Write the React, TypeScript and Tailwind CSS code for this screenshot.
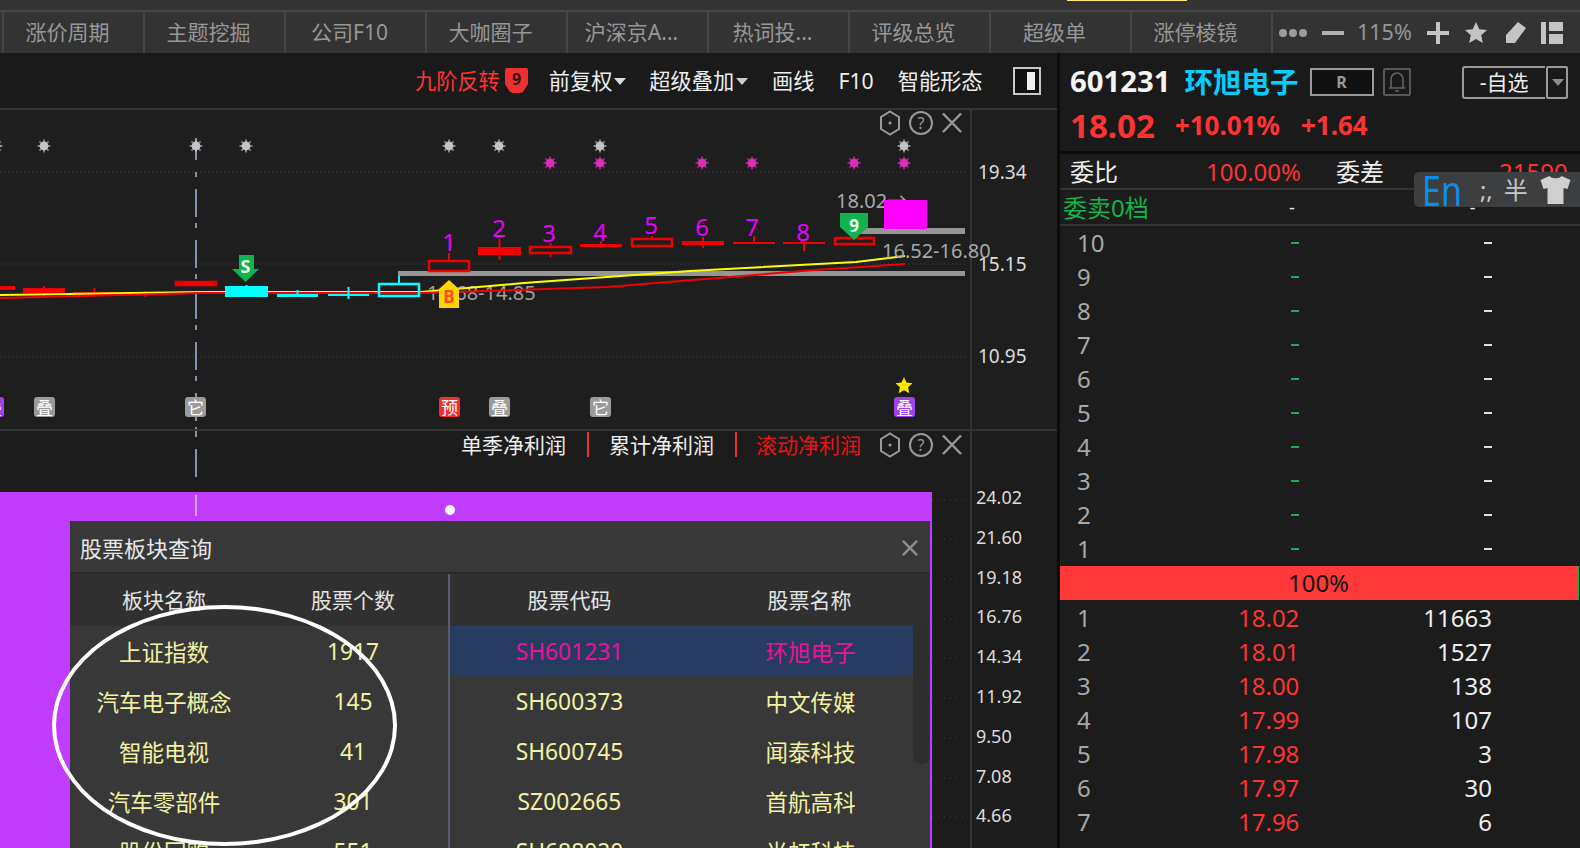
import React from "react";

const tabs = ["涨价周期", "主题挖掘", "公司F10", "大咖圈子", "沪深京A...", "热词投...", "评级总览", "超级单", "涨停棱镜"];

type C = { l: number; r: number; t: number; b: number; wt?: number; wb?: number; c: string; hollow?: boolean };
const R = "#f00000";
const Y = "#00ffff";
const candles: C[] = [
  { l: -10, r: 15, t: 286, b: 290, c: R },
  { l: 23, r: 65, t: 288, b: 293, wt: 286, wb: 296, c: R },
  { l: 73, r: 116, t: 292, b: 295, wt: 288, wb: 297, c: R },
  { l: 124, r: 167, t: 292, b: 295, wt: 291, wb: 297, c: R },
  { l: 175, r: 217, t: 281, b: 286, c: R, hollow: true },
  { l: 225, r: 268, t: 286, b: 297, wt: 285, c: Y },
  { l: 277, r: 318, t: 294, b: 297, wt: 290, c: Y },
  { l: 328, r: 369, t: 294, b: 296, wt: 287, wb: 299, c: Y },
  { l: 378, r: 420, t: 283, b: 297, wt: 276, c: Y, hollow: true },
  { l: 428, r: 470, t: 260, b: 272, wt: 253, c: R, hollow: true },
  { l: 478, r: 521, t: 247, b: 255, wt: 239, wb: 260, c: R },
  { l: 529, r: 572, t: 246, b: 254, wt: 243, wb: 257, c: R, hollow: true },
  { l: 580, r: 622, t: 244, b: 247, wt: 241, wb: 248, c: R },
  { l: 631, r: 673, t: 238, b: 247, wt: 236, c: R, hollow: true },
  { l: 682, r: 724, t: 241, b: 245, wt: 237, wb: 248, c: R },
  { l: 733, r: 775, t: 242, b: 244, wt: 236, c: R },
  { l: 783, r: 825, t: 242, b: 244, wb: 251, c: R },
  { l: 834, r: 875, t: 237, b: 245, c: R, hollow: true },
];
const nums = [[449, 242], [499, 228], [549, 233], [600, 232], [651, 225], [702, 227], [752, 227], [803, 232]];
const grayStars = [-4, 44, 196, 246, 449, 499, 600, 904];
const pinkStars = [550, 600, 702, 752, 854, 904];

function Star({ x, y, c }: { x: number; y: number; c: string }) {
  const rays = [0, 45, 90, 135];
  return (
    <g>
      {rays.map((a) => (
        <line key={a} x1={x - 6.5} y1={y} x2={x + 6.5} y2={y} stroke={c} strokeWidth={2} strokeOpacity={0.6} transform={`rotate(${a} ${x} ${y})`} />
      ))}
      <circle cx={x} cy={y} r={4.4} fill={c} />
    </g>
  );
}

function PanelIcons() {
  return (
    <svg width="92" height="28" viewBox="0 0 92 28" fill="none" stroke="#9a9a9a" strokeWidth="2">
      <path d="M12 2.500 21 8v12l-9 5.500L3 20V8z" />
      <circle cx="12" cy="14" r="1.600" fill="#9a9a9a" stroke="none" />
      <circle cx="43" cy="14" r="11" />
      <text x="43" y="20" textAnchor="middle" fontSize="16" fill="#9a9a9a" stroke="none">?</text>
      <path d="M65 4.500 83 23M83 4.500 65 23" strokeWidth="2.400" />
    </svg>
  );
}

function Badge({ t, bg, x }: { t: string; bg: string; x: string }) {
  return (
    <div className={`absolute top-[287px] w-[21px] h-[20px] rounded-[3px] flex items-center justify-center text-white text-[17px] leading-none ${bg} ${x}`}>
      {t}
    </div>
  );
}

function Tri({ c = "#dddddd" }: { c?: string }) {
  return (
    <svg width="12" height="7" viewBox="0 0 12 7" className="ml-[2px]">
      <path d="M0 0h12L6 7z" fill={c} />
    </svg>
  );
}

function Candle({ k, dark }: { k: C; dark: boolean }) {
  const cx = (k.l + k.r) / 2;
  return (
    <g>
      {k.wt !== undefined && <line x1={cx} x2={cx} y1={k.wt} y2={k.t} stroke={k.c} strokeWidth="2" />}
      {k.wb !== undefined && <line x1={cx} x2={cx} y1={k.b} y2={k.wb} stroke={k.c} strokeWidth="2" />}
      <rect x={k.l + (k.hollow ? 1 : 0)} y={k.t + (k.hollow ? 1 : 0)} width={k.r - k.l - (k.hollow ? 2 : 0)} height={k.b - k.t - (k.hollow ? 2 : 0)} fill={k.hollow ? (dark ? "#8b0000" : "none") : k.c} stroke={k.hollow ? k.c : "none"} strokeWidth="2.500" />
    </g>
  );
}

function Chart() {
  return (
    <svg className="absolute left-0 top-0 overflow-visible" width="970" height="319" viewBox="0 110 970 319">
      {[172, 264, 357].map((y) => (
        <line key={y} x1="0" x2="965" y1={y} y2={y} stroke="#444444" strokeDasharray="1 3" />
      ))}
      <line x1="196" x2="196" y1="138" y2="429" stroke="#8294ac" strokeWidth="2" strokeDasharray="22 12 5 12 28 6 5 12 28 6 5 12 28 6 5 12 28 6 5 12 28 6 5 12 28 6 5 12" />
      {grayStars.map((x) => <Star key={x} x={x} y={146} c="#c4c4c4" />)}
      {pinkStars.map((x) => <Star key={x} x={x} y={163} c="#d92fb4" />)}
      <rect x="860" y="228" width="105" height="6" fill="#969696" />
      <rect x="398" y="271" width="567" height="5" fill="#969696" />
      <text x="427" y="300" fontSize="20" fill="#a0a0a0">14.68-14.85</text>
      {candles.slice(0, 5).map((k, i) => <Candle key={i} k={k} dark={i === 4} />)}
      <polyline points="0,295 200,292 421,292 524,283 690,271 856,262 905,256" fill="none" stroke="#ffff00" strokeWidth="2" />
      <polyline points="0,298 200,293 421,293 607,287 815,270 905,264" fill="none" stroke="#f00000" strokeWidth="2" />
      {candles.slice(5).map((k, i) => <Candle key={i} k={k} dark={false} />)}
      {nums.map(([x, y], i) => (
        <text key={i} x={x} y={y + 9} textAnchor="middle" fontSize="24" fill="#e600ff">{i + 1}</text>
      ))}
      <text x="836" y="208" fontSize="20" fill="#a8a8a8">18.02→</text>
      <rect x="884" y="200" width="43" height="29" fill="#ff00ff" />
      <text x="882" y="258" fontSize="20" fill="#a8a8a8">16.52-16.80</text>
      <path d="M239 255h15v14h5l-13.500 13L232 269h7z" fill="#12b34c" />
      <text x="245.500" y="273" textAnchor="middle" fontSize="18" fontWeight="700" fill="#e8ffe8">S</text>
      <path d="M840 213h28v14l-14 13-14-13z" fill="#12b34c" />
      <text x="854" y="232" textAnchor="middle" fontSize="17" fontWeight="700" fill="#e8ffe8">9</text>
      <path d="M449 280l10 9v19h-20v-19z" fill="#ffd400" />
      <text x="449" y="303" textAnchor="middle" fontSize="17" fontWeight="700" fill="#ff4a20">B</text>
      <path d="M904 377l2.500 5.500 6 .7-4.400 4.100 1.200 6-5.300-3-5.300 3 1.200-6-4.400-4.100 6-.7z" fill="#ffe600" />
    </svg>
  );
}

const leftRows = [["上证指数", "1917"], ["汽车电子概念", "145"], ["智能电视", "41"], ["汽车零部件", "301"], ["股份回购", "551"]];
const rightRows = [["SH601231", "环旭电子"], ["SH600373", "中文传媒"], ["SH600745", "闻泰科技"], ["SZ002665", "首航高科"], ["SH688020", "光虹科技"]];
const lowAxis = ["24.02", "21.60", "19.18", "16.76", "14.34", "11.92", "9.50", "7.08", "4.66"];
const bids = [["18.02", "11663"], ["18.01", "1527"], ["18.00", "138"], ["17.99", "107"], ["17.98", "3"], ["17.97", "30"], ["17.96", "6"], ["17.95", "1"]];

function Dialog() {
  return (
    <div className="flex-1 min-w-0 h-full flex flex-col bg-[#383838] border-r-2 border-[#c03cff] text-[21px]">
      <div className="h-[51px] shrink-0 flex items-center justify-between pl-[10px] pr-[12px] pt-[3px] text-[#e8e8e8] text-[22px]">
        <span>股票板块查询</span>
        <svg width="16" height="16" viewBox="0 0 18 18" stroke="#8c8c8c" strokeWidth="2.800"><path d="M1 1l16 16M17 1 1 17" /></svg>
      </div>
      <div className="h-[2px] shrink-0 bg-[#2b2b2b]" />
      <div className="flex flex-1 min-h-0">
        <div className="w-[378px] shrink-0 flex flex-col">
          <div className="h-[52px] shrink-0 bg-[#303030] grid grid-cols-[188px_190px] items-center text-center text-[#e4e4e4] pt-[2px]">
            <span>板块名称</span><span>股票个数</span>
          </div>
          {leftRows.map(([a, b]) => (
            <div key={a} className="h-[50px] shrink-0 grid grid-cols-[188px_190px] items-center text-center text-[#f2f2a2] pt-[3px]">
              <span className="text-[22.500px]">{a}</span><span className="text-[22.800px]">{b}</span>
            </div>
          ))}
        </div>
        <div className="w-[2px] shrink-0 bg-[#5a5c70]" />
        <div className="flex-1 relative flex flex-col">
          <div className="h-[52px] shrink-0 bg-[#303030] grid grid-cols-[239px_241px] items-center text-center text-[#e4e4e4] pt-[2px]">
            <span>股票代码</span><span>股票名称</span>
          </div>
          {rightRows.map(([a, b], i) => (
            <div key={a} className={i === 0
              ? "h-[50px] w-[463px] shrink-0 grid grid-cols-[239px_243px] items-center text-center text-[#f0109a] bg-[#263c60] pt-[3px]"
              : "h-[50px] w-[463px] shrink-0 grid grid-cols-[239px_243px] items-center text-center text-[#f2f2a2] pt-[3px]"}>
              <span className="text-[22.800px]">{a}</span><span className="text-[22.500px]">{b}</span>
            </div>
          ))}
          <div className="absolute right-0 top-[52px] w-[17px] h-[138px] bg-[#2e2e2e] rounded-b-[8px]" />
        </div>
      </div>
    </div>
  );
}

export default function App() {
  return (
    <div className="w-[1580px] h-[848px] overflow-hidden flex flex-col bg-[#1c1c1c] font-['Noto_Sans','Noto_Sans_CJK_SC',sans-serif] relative">
      {/* top strip */}
      <div className="h-[10px] shrink-0 bg-[#333333] flex justify-start">
        <div className="ml-[1067px] w-[120px] h-[1px] bg-[#ffe27a]" />
      </div>
      <div className="h-[2px] shrink-0 bg-[#464646]" />
      <div className="h-[41px] shrink-0 bg-[#333333] flex items-stretch pl-[2px] text-[#979797] text-[21px]">
        {tabs.map((t) => (
          <div key={t} className="w-[141px] shrink-0 border-l-2 border-[#464646] flex items-center justify-center whitespace-nowrap pr-[12px]">{t}</div>
        ))}
        <div className="flex-1 border-l-2 border-[#464646] flex items-center pl-[5px]">
          <svg width="30" height="10" viewBox="0 0 30 10" fill="#9c9c9c"><circle cx="5" cy="5" r="4" /><circle cx="15" cy="5" r="4" /><circle cx="25" cy="5" r="4" /></svg>
          <div className="ml-[14px] w-[22px] h-[4px] bg-[#b0b0b0]" />
          <span className="ml-[13px] w-[56px] text-[21.500px] text-[#979797]">115%</span>
          <svg className="ml-[14px]" width="22" height="22" viewBox="0 0 22 22" fill="#c4c4c4"><rect x="9" y="0" width="4" height="22" /><rect x="0" y="9" width="22" height="4" /></svg>
          <svg className="ml-[15px]" width="24" height="24" viewBox="0 0 24 24" fill="#c4c4c4"><path d="M12 1l3.300 7.300 7.700.8-5.800 5.200 1.700 7.700L12 18l-6.900 4 1.700-7.700L1 9.100l7.700-.8z" /></svg>
          <svg className="ml-[15px]" width="24" height="24" viewBox="0 0 24 24" fill="#c4c4c4"><path d="M15 1l8 6-11 15H3v-8z" /></svg>
          <svg className="ml-[13px]" width="24" height="22" viewBox="0 0 24 22" fill="#c4c4c4"><rect x="1" y="0" width="5" height="22" /><rect x="9" y="0" width="14" height="9" /><rect x="9" y="12" width="14" height="10" /></svg>
        </div>
      </div>
      {/* main */}
      <div className="flex-1 min-h-0 flex">
        <div className="w-[1057px] shrink-0 flex flex-col">
          <div className="h-[57px] shrink-0 bg-[#1a1a1a] border-b-2 border-[#333333] flex items-center pl-[415px] pt-[1px] text-[21.200px] text-[#eeeeee]">
            <span className="text-[#ff3333]">九阶反转</span>
            <svg className="ml-[5px] mb-[1px]" width="23" height="25" viewBox="0 0 23 25"><path d="M1 0h21l1 2v14l-5 8-3 1H8l-3-1-5-8V2z" fill="#f03030" /><text x="11.500" y="17" textAnchor="middle" fontSize="16" fontWeight="700" fill="#3a1010">9</text></svg>
            <span className="ml-[21px]">前复权</span><Tri />
            <span className="ml-[23px]">超级叠加</span><Tri c="#cccccc" />
            <span className="ml-[24px]">画线</span>
            <span className="ml-[24px]">F10</span>
            <span className="ml-[24px]">智能形态</span>
            <div className="ml-[30px] w-[28px] h-[28px] border-2 border-[#c8c8c8] flex justify-end items-center pr-[4px] bg-[#111111]">
              <div className="w-[8px] h-[18px] bg-[#eeeeee]" />
            </div>
          </div>
          {/* upper chart */}
          <div className="h-[319px] shrink-0 flex bg-[#1e1e1e]">
            <div className="w-[970px] shrink-0 relative">
              <Chart />
              <Badge t="叠" bg="bg-[#a040e8]" x="left-[-17px]" />
              <Badge t="叠" bg="bg-[#9a9a9a]" x="left-[34px]" />
              <Badge t="它" bg="bg-[#9a9a9a]" x="left-[185px]" />
              <Badge t="预" bg="bg-[#f03030]" x="left-[439px]" />
              <Badge t="叠" bg="bg-[#9a9a9a]" x="left-[489px]" />
              <Badge t="它" bg="bg-[#9a9a9a]" x="left-[590px]" />
              <Badge t="叠" bg="bg-[#a040e8]" x="left-[894px]" />
              <div className="absolute left-[878px] top-[-1px]"><PanelIcons /></div>
            </div>
            <div className="flex-1 border-l-2 border-[#333333] pt-[16px] pl-[6px] text-[19px] text-[#dddddd] flex flex-col">
              <div className="h-[92px] leading-[92px]">19.34</div>
              <div className="h-[92px] leading-[92px]">15.15</div>
              <div className="h-[92px] leading-[92px]">10.95</div>
            </div>
          </div>
          <div className="h-[2px] shrink-0 bg-[#333333]" />
          {/* lower panel */}
          <div className="flex-1 min-h-0 flex bg-[#1c1c1c]">
            <div className="w-[970px] shrink-0 relative flex flex-col">
              <div className="h-[61px] shrink-0 flex items-start justify-end text-[21px]">
                <span className="text-[#eeeeee] leading-[28px]">单季净利润</span>
                <div className="ml-[21px] w-[2px] h-[25px] bg-[#f03030] mt-[1px]" />
                <span className="ml-[20px] text-[#eeeeee] leading-[28px]">累计净利润</span>
                <div className="ml-[21px] w-[2px] h-[25px] bg-[#f03030] mt-[1px]" />
                <span className="ml-[19px] text-[#ee1111] leading-[28px]">滚动净利润</span>
                <div className="ml-[17px]"><PanelIcons /></div>
              </div>
              <div className="flex-1 min-h-0 w-[932px] bg-[#c03cff] pl-[70px] pt-[29px]">
                <Dialog />
              </div>
              <div className="absolute left-[195px] top-[0px] w-[2px] h-[85px] flex flex-col gap-[12px]">
                <div className="h-[6px] bg-[#8294ac]" />
                <div className="h-[28px] bg-[#8294ac]" />
              </div>
              <div className="absolute left-[195px] top-[64px] w-[2px] h-[21px] bg-[#d8a4ff]" />
              <div className="absolute left-[445px] top-[74px] w-[10px] h-[10px] rounded-full bg-white" />
              {/* dotted grid at the right of the purple block */}
              <svg className="absolute left-[932px] top-[61px]" width="33" height="360" viewBox="0 0 33 360">
                {[8, 47, 87, 127, 166, 206, 246, 286, 325].map((y) => (
                  <line key={y} x1="0" x2="33" y1={y} y2={y} stroke="#444444" strokeDasharray="1 5" />
                ))}
              </svg>
            </div>
            <div className="flex-1 border-l-2 border-[#333333] pt-[47px] pl-[4px] text-[18px] text-[#dddddd] flex flex-col">
              {lowAxis.map((v) => (
                <div key={v} className="h-[39.800px] leading-[39.800px] shrink-0">{v}</div>
              ))}
            </div>
          </div>
        </div>
        <div className="w-[3px] shrink-0 bg-[#0c0c0c]" />
        {/* right panel */}
        <div className="flex-1 min-w-0 flex flex-col bg-[#1c1c1c] text-[24px]">
          <div className="h-[98px] shrink-0 flex flex-col bg-[#1a1a1a] pt-[11px] pl-[10px]">
            <div className="flex items-center h-[36px]">
              <span className="text-[29.300px] font-bold text-[#f4f4f4] leading-none">601231</span>
              <span className="ml-[14px] text-[28.500px] font-bold text-[#00cfff] leading-none">环旭电子</span>
              <div className="ml-[11px] w-[64px] h-[28px] border-2 border-[#9a9a9a] flex items-center justify-center text-[16px] font-bold text-[#9a9a9a] bg-[#111111]">R</div>
              <div className="ml-[9px] w-[28px] h-[28px] border-2 border-[#555a60] rounded-[2px] flex items-center justify-center">
                <svg width="18" height="22" viewBox="0 0 18 22" fill="none" stroke="#606468" strokeWidth="1.600"><path d="M3 17V8c0-3 2.500-6 6-6s6 3 6 6v9M1 17h16M7 20h4" /></svg>
              </div>
              <div className="ml-[51px] w-[83px] h-[33px] border-2 border-r-0 border-[#9a9a9a] rounded-l-[3px] flex items-center justify-center text-[21px] text-[#eeeeee] pt-[1px]">-自选</div>
              <div className="ml-[1px] w-[22px] h-[33px] border-2 border-[#9a9a9a] rounded-[2px] flex items-center justify-center"><Tri c="#8c8c8c" /></div>
            </div>
            <div className="flex items-center h-[44px] mt-[3px] text-[#ff3333] font-bold">
              <span className="text-[33px] leading-none">18.02</span>
              <span className="ml-[20px] text-[26px] leading-none">+10.01%</span>
              <span className="ml-[21px] text-[26px] leading-none">+1.64</span>
            </div>
          </div>
          <div className="h-[3px] shrink-0 bg-[#0c0c0c]" />
          <div className="h-[34px] shrink-0 flex items-center pl-[10px] pt-[2px]">
            <span className="text-[#eeeeee] w-[48px]">委比</span>
            <span className="ml-[88px] text-[#ff3333] w-[100px]">100.00%</span>
            <span className="ml-[30px] text-[#eeeeee] w-[48px]">委差</span>
            <span className="ml-[115px] text-[#ff3333]">21590</span>
          </div>
          <div className="h-[2px] shrink-0 bg-[#333333]" />
          <div className="h-[34px] shrink-0 flex items-center pl-[3px] pt-[1px] text-[#e4e4e4]">
            <span className="text-[#12b34c] w-[87px] text-[24px] whitespace-nowrap">委卖0档</span>
            <span className="ml-[139px] text-[18px]">-</span>
            <span className="ml-[175px] text-[18px]">-</span>
          </div>
          <div className="h-[2px] shrink-0 bg-[#333333]" />
          {[10, 9, 8, 7, 6, 5, 4, 3, 2, 1].map((n) => (
            <div key={n} className="h-[34px] shrink-0 flex items-center pl-[17px]">
              <span className="w-[214px] text-[#a8a8a8]">{n}</span>
              <span className="w-[8px] h-[2px] bg-[#12b34c]" />
              <span className="ml-[185px] w-[8px] h-[2px] bg-[#dddddd]" />
            </div>
          ))}
          <div className="h-[34px] shrink-0 flex pr-[1px]">
            <div className="flex-1 bg-[#ff3838] flex items-center justify-center text-[#111111]">100%</div>
            <div className="w-[2px] bg-[#12b34c]" />
          </div>
          {bids.map(([p, v], i) => (
            <div key={p} className="h-[34px] shrink-0 flex items-center pl-[17px] pt-[1px]">
              <span className="w-[161px] text-[#a8a8a8]">{i + 1}</span>
              <span className="w-[80px] text-[#ff3333]">{p}</span>
              <span className="w-[174px] text-right text-[#eeeeee]">{v}</span>
            </div>
          ))}
        </div>
      </div>
      {/* circled annotation */}
      <div className="absolute left-[52px] top-[605px] w-[345px] h-[241px] rounded-[50%] border-[4px] border-white" />
      {/* IME status bar */}
      <div className="absolute left-[1414px] top-[172px] w-[166px] h-[35px] bg-[#3c3e40] rounded-l-[5px] flex items-center pl-[8px]">
        <span className="text-[34px] leading-none text-[#0a8fe6] scale-y-[1.25]">En</span>
        <span className="ml-[18px] text-[24px] leading-none text-[#c8c8c8]">;,</span>
        <span className="ml-[11px] text-[24px] leading-none text-[#c8c8c8]">半</span>
        <svg className="ml-[11px]" width="33" height="30" viewBox="0 0 32 30" fill="#d0d0d0"><path d="M10 1c2 3 10 3 12 0l9 4-3 9-4-1v16H8V13l-4 1-3-9z" /></svg>
      </div>
    </div>
  );
}
